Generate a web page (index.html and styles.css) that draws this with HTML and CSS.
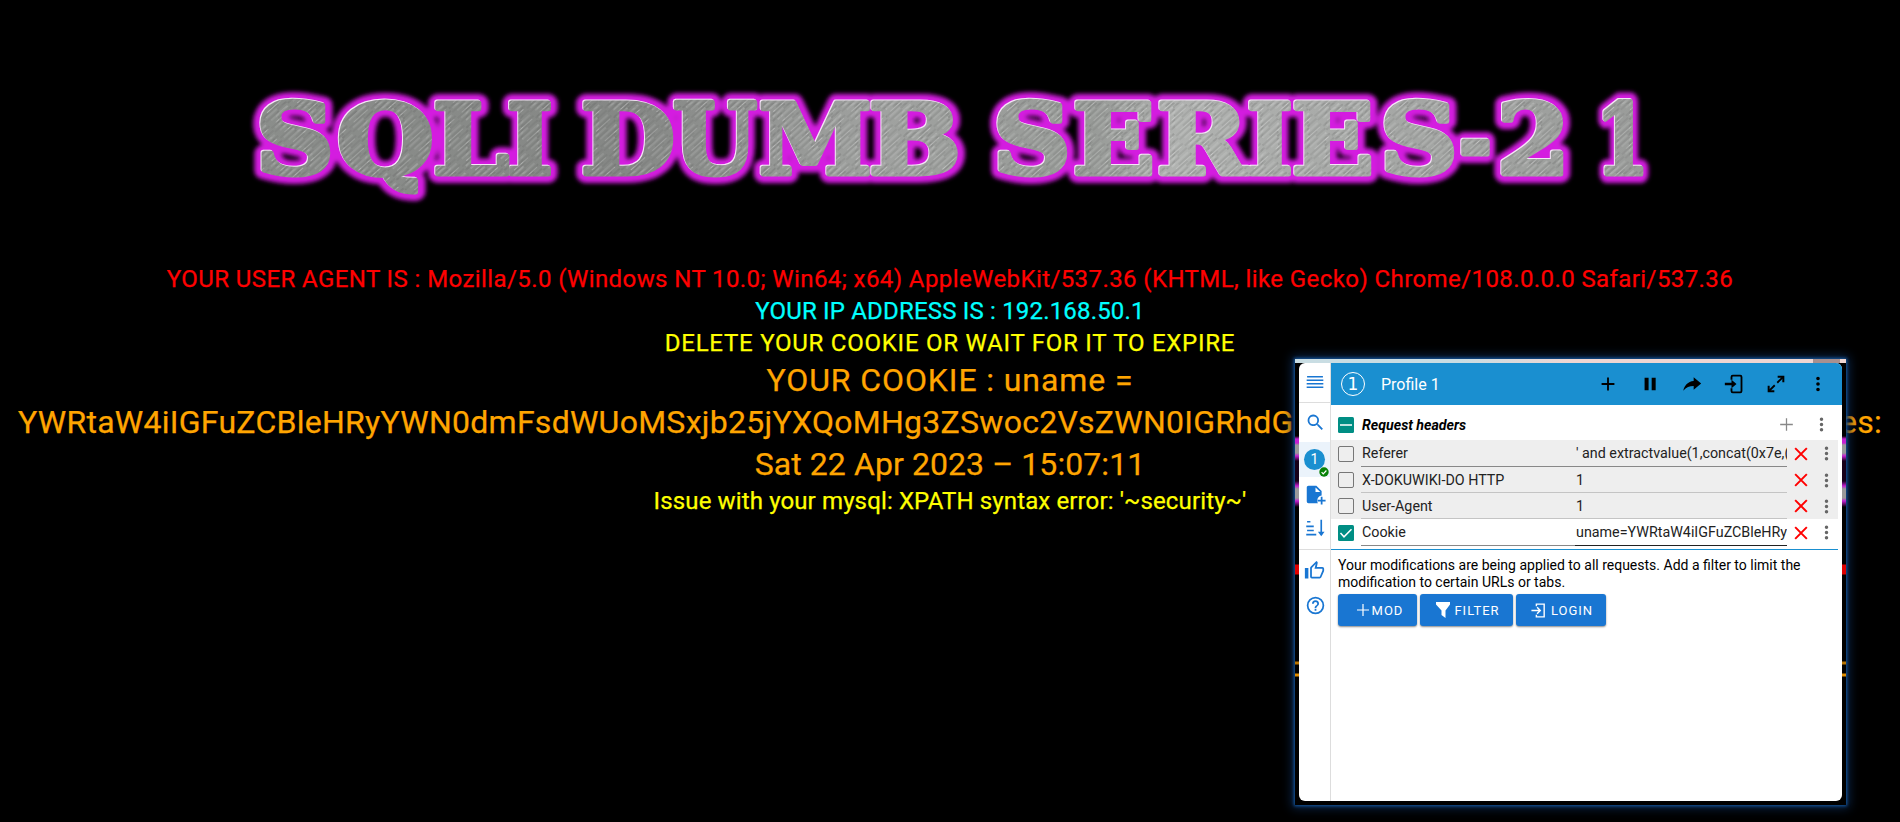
FILE: index.html
```html
<!DOCTYPE html>
<html lang="en">
<head>
<meta charset="utf-8">
<title>SQLI Dumb Series-21</title>
<link rel="stylesheet" href="styles.css">
</head>
<body>
<svg class="defs" width="0" height="0">
  <symbol id="plus" viewBox="0 0 24 24"><path d="M19 13h-6v6h-2v-6H5v-2h6V5h2v6h6z"/></symbol>
  <symbol id="thin-plus" viewBox="0 0 24 24"><path d="M20 12.800h-7.200V20h-1.600v-7.200H4v-1.600h7.200V4h1.600v7.200H20z"/></symbol>
  <symbol id="dots" viewBox="0 0 24 24"><path d="M12 8a2 2 0 1 0 0-4 2 2 0 0 0 0 4m0 2a2 2 0 1 0 0 4 2 2 0 0 0 0-4m0 6a2 2 0 1 0 0 4 2 2 0 0 0 0-4"/></symbol>
  <symbol id="login" viewBox="0 0 24 24"><path d="M9 6V3h11v18H9v-3M2 12h12M10 7.500l4.500 4.500-4.500 4.500" fill="none" stroke="currentColor" stroke-width="2"/></symbol>
  <symbol id="login-bold" viewBox="0 0 24 24"><path d="M9 7V3.500A1.500 1.500 0 0 1 10.500 2h9A1.500 1.500 0 0 1 21 3.500v17a1.500 1.500 0 0 1-1.500 1.500h-9A1.500 1.500 0 0 1 9 20.500V17" fill="none" stroke="currentColor" stroke-width="2.200"/><path d="M1 10.500h8V7l6 5-6 5v-3.500H1z"/></symbol>
  <symbol id="cross" viewBox="0 0 24 24"><path d="M5 5l14 14M19 5L5 19" stroke="#f00" stroke-width="2.400"/></symbol>
</svg>

<main class="page">
  <h1 class="banner">
    <svg width="1900" height="250" viewBox="0 0 1900 250" role="img">
      <defs>
        <linearGradient id="steel" x1="250" x2="1650" y1="100" y2="176" gradientUnits="userSpaceOnUse">
          <stop offset="0" stop-color="#8b8e8b"/><stop offset=".27" stop-color="#858785"/>
          <stop offset=".45" stop-color="#a0a2a0"/><stop offset=".6" stop-color="#979a97"/>
          <stop offset=".66" stop-color="#b0b2b0"/><stop offset="1" stop-color="#999b99"/>
        </linearGradient>
        <pattern id="brushed" width="13" height="29" patternUnits="userSpaceOnUse" patternTransform="rotate(48)">
          <path d="M1 0v17M4 8v21M7 0v12M9 12v17" stroke="#555" stroke-opacity=".25"/>
          <path d="M2.500 3v19M6 12v14M11 2v22" stroke="#fff" stroke-opacity=".18"/>
        </pattern>
        <filter id="soft" x="-5%" y="-40%" width="110%" height="180%"><feGaussianBlur stdDeviation="2.200"/></filter>
        <text id="wordmark" class="wordmark" y="174"><tspan x="256" textLength="78" lengthAdjust="spacingAndGlyphs">S</tspan><tspan x="337" textLength="97" lengthAdjust="spacingAndGlyphs">Q</tspan><tspan x="433" textLength="76" lengthAdjust="spacingAndGlyphs">L</tspan><tspan x="507" textLength="46" lengthAdjust="spacingAndGlyphs">I</tspan> <tspan x="581" textLength="94" lengthAdjust="spacingAndGlyphs">D</tspan><tspan x="673" textLength="84" lengthAdjust="spacingAndGlyphs">U</tspan><tspan x="759" textLength="113" lengthAdjust="spacingAndGlyphs">M</tspan><tspan x="869" textLength="92" lengthAdjust="spacingAndGlyphs">B</tspan> <tspan x="993" textLength="78" lengthAdjust="spacingAndGlyphs">S</tspan><tspan x="1073" textLength="82" lengthAdjust="spacingAndGlyphs">E</tspan><tspan x="1157" textLength="91" lengthAdjust="spacingAndGlyphs">R</tspan><tspan x="1247" textLength="46" lengthAdjust="spacingAndGlyphs">I</tspan><tspan x="1292" textLength="82" lengthAdjust="spacingAndGlyphs">E</tspan><tspan x="1380" textLength="78" lengthAdjust="spacingAndGlyphs">S</tspan><tspan x="1459" textLength="33" lengthAdjust="spacingAndGlyphs">-</tspan><tspan x="1497" textLength="73" lengthAdjust="spacingAndGlyphs">2</tspan> <tspan x="1596" textLength="53" lengthAdjust="spacingAndGlyphs">1</tspan></text>
      </defs>
      <use class="halo" href="#wordmark"/>
      <use class="edge" href="#wordmark" x="-1" y="-1"/>
      <use class="face" href="#wordmark"/>
      <use class="grain" href="#wordmark"/>
    </svg>
  </h1>
  <div class="report">
    <p class="agent">YOUR USER AGENT IS : Mozilla/5.0 (Windows NT 10.0; Win64; x64) AppleWebKit/537.36 (KHTML, like Gecko) Chrome/108.0.0.0 Safari/537.36</p>
    <p class="ip">YOUR IP ADDRESS IS : 192.168.50.1</p>
    <p class="notice">DELETE YOUR COOKIE OR WAIT FOR IT TO EXPIRE</p>
    <p class="cookie cookie-name">YOUR COOKIE : uname =</p>
    <p class="cookie cookie-value"><span>YWRtaW4iIGFuZCBleHRyYWN0dmFsdWUoMSxjb25jYXQoMHg3ZSwoc2VsZWN0IGRhdG</span><span>es:</span></p>
    <p class="cookie cookie-date">Sat 22 Apr 2023 – 15:07:11</p>
    <p class="issue">Issue with your mysql: XPATH syntax error: '~security~'</p>
  </div>
</main>

<aside class="popup">
  <div class="panel">
    <nav class="rail">
      <div class="rail-menu"><svg width="20" height="20" viewBox="0 0 24 24"><path d="M2.500 4.500h19M2 8.700h20M2 12.900h20M2 17.100h20" stroke="currentColor" stroke-width="1.900"/></svg></div>
      <div class="rail-search"><svg width="21" height="21" viewBox="0 0 24 24"><path d="M15.500 14h-.79l-.28-.27A6.500 6.500 0 1 0 13.730 14.430l.27.28v.79l5 4.990L20.490 19zm-6 0a4.500 4.500 0 1 1 0-9 4.500 4.500 0 0 1 0 9"/></svg></div>
      <div class="rail-profile"><span class="bubble">1</span><svg class="tick" width="10" height="10" viewBox="0 0 10 10"><circle cx="5" cy="5" r="4.700" fill="#078207"/><path d="M2.600 5.200l1.600 1.600 3.200-3.300" fill="none" stroke="#fff" stroke-width="1.200"/></svg></div>
      <div class="rail-file"><svg width="21" height="21" viewBox="0 0 24 24"><path d="M4 2h9l6 6v5c-3 .3-5 2.800-5 6 0 1 .2 2 .7 3H4a2 2 0 0 1-2-2V4c0-1.100.9-2 2-2m8 2v5h5.500zM18 14.500h2V18h3.500v2H20v3.500h-2V20h-3.500v-2H18z"/></svg></div>
      <div class="rail-sort"><svg width="20" height="20" viewBox="0 0 24 24"><path d="M2.500 4.500h4M1.500 10h9M2.500 15h8M1.500 20h12M19.500 2v18" fill="none" stroke="currentColor" stroke-width="2"/><path d="M15.500 16.500h8L19.500 22z"/></svg></div>
      <div class="rail-like"><svg width="21" height="21" viewBox="0 0 24 24"><path d="M9 21h9a2 2 0 0 0 1.840-1.220l3.020-7.050c.09-.23.14-.47.14-.73v-2a2 2 0 0 0-2-2h-6.310l.95-4.570.03-.32c0-.41-.17-.79-.44-1.060L14.170 1 7.580 7.590C7.220 7.950 7 8.450 7 9v10a2 2 0 0 0 2 2M9 9l4.340-4.340L12 10h9v2l-3 7H9zM1 9h4v12H1z"/></svg></div>
      <div class="rail-help"><svg width="21" height="21" viewBox="0 0 24 24"><path d="M11 18h2v-2h-2zm1-16a10 10 0 1 0 0 20 10 10 0 0 0 0-20m0 18a8 8 0 1 1 0-16 8 8 0 0 1 0 16m0-14a4 4 0 0 0-4 4h2a2 2 0 1 1 4 0c0 2-3 1.750-3 5h2c0-2.250 3-2.500 3-5a4 4 0 0 0-4-4"/></svg></div>
    </nav>
    <div class="content">
      <header class="toolbar">
        <span class="profile-no">1</span>
        <span class="profile-name">Profile 1</span>
        <div class="tools">
          <svg width="22" height="22"><use href="#plus"/></svg>
          <svg width="20" height="20" viewBox="0 0 24 24"><path d="M5.500 4.500h4.800v15H5.500zM14 4.500h4.800v15H14z"/></svg>
          <svg width="20" height="20" viewBox="0 0 24 24"><path d="M14 4l9 7.500-9 7.500v-4.500c-5 0-9 1.500-12.500 5.500C3 14 7 9 14 8.500z"/></svg>
          <svg width="20" height="20"><use href="#login-bold"/></svg>
          <svg width="20" height="20" viewBox="0 0 24 24"><path d="M13.500 10.500L20 4M10.500 13.500L4 20" stroke="currentColor" stroke-width="2.200"/><path d="M14 2h8v8h-2.400V4.400H14zM10 22H2v-8h2.400v5.600H10z"/></svg>
          <svg width="22" height="22"><use href="#dots"/></svg>
        </div>
      </header>
      <div class="section">
        <svg class="box" width="16" height="16" viewBox="0 0 16 16"><rect width="16" height="16" rx="1.500" fill="#008e84"/><path d="M2 8h12" stroke="#fff" stroke-width="1.300"/></svg>
        <b class="section-name">Request headers</b>
        <svg class="section-add" width="19" height="19"><use href="#thin-plus"/></svg>
        <svg class="more" width="21" height="21"><use href="#dots"/></svg>
      </div>
      <div class="row off first"><span class="check"></span><span class="key">Referer</span><span class="value">' and extractvalue(1,concat(0x7e,(</span><svg class="remove" width="20" height="20"><use href="#cross"/></svg><svg class="more" width="21" height="21"><use href="#dots"/></svg></div>
      <div class="row off light"><span class="check"></span><span class="key">X-DOKUWIKI-DO HTTP</span><span class="value">1</span><svg class="remove" width="20" height="20"><use href="#cross"/></svg><svg class="more" width="21" height="21"><use href="#dots"/></svg></div>
      <div class="row off light"><span class="check"></span><span class="key">User-Agent</span><span class="value">1</span><svg class="remove" width="20" height="20"><use href="#cross"/></svg><svg class="more" width="21" height="21"><use href="#dots"/></svg></div>
      <div class="row on"><svg class="box" width="16" height="16" viewBox="0 0 16 16"><rect width="16" height="16" rx="1.500" fill="#008e84"/><path d="M2.500 8l3.500 3.800 7.500-7.600" fill="none" stroke="#fff" stroke-width="1.500"/></svg><span class="key">Cookie</span><span class="value">uname=YWRtaW4iIGFuZCBleHRy</span><svg class="remove" width="20" height="20"><use href="#cross"/></svg><svg class="more" width="21" height="21"><use href="#dots"/></svg></div>
      <div class="rule"></div>
      <p class="hint">Your modifications are being applied to all requests. Add a filter to limit the<br>modification to certain URLs or tabs.</p>
      <div class="actions">
        <button class="mod"><svg width="18" height="18"><use href="#thin-plus"/></svg>MOD</button>
        <button class="filter"><svg width="16" height="16" viewBox="0 0 16 16"><path d="M1 0h14v2.500L10.500 8.500V16l-4-3V8.500L1 2.500z"/></svg>FILTER</button>
        <button class="login"><svg width="17" height="17"><use href="#login"/></svg>LOGIN</button>
      </div>
    </div>
  </div>
</aside>
</body>
</html>
```
FILE: styles.css
```css
* { box-sizing: border-box; }
body { margin: 0; width: 1900px; height: 822px; overflow: hidden; background: #000; font-family: Roboto, sans-serif; }
.defs { display: block; position: absolute; }
p { margin: 0; }

.banner { margin: 0; height: 250px; }
.banner svg { display: block; }
.wordmark { font: bold 98px "DejaVu Serif", serif; stroke-linejoin: round; }
.halo { fill: #d41fe0; stroke: #d41fe0; stroke-width: 18px; filter: url(#soft); }
.edge { fill: #f6e6f8; stroke: #f6e6f8; stroke-width: 5px; }
.face { fill: url(#steel); stroke: url(#steel); stroke-width: 5px; }
.grain { fill: url(#brushed); stroke: url(#brushed); stroke-width: 5px; }

.report { padding: 13px 18px 0; text-align: center; font-size: 24px; line-height: 32px; white-space: nowrap; -webkit-text-stroke: .25px currentColor; }
.agent { color: #f00; letter-spacing: .41px; }
.ip { color: #0ff; letter-spacing: .18px; }
.notice, .issue { color: #ff0; }
.notice { letter-spacing: .76px; }
.issue { letter-spacing: .13px; }
.cookie { color: #ffa500; font-size: 32px; line-height: 42px; }
.cookie-name { letter-spacing: .9px; }
.cookie-value { display: flex; justify-content: space-between; letter-spacing: .27px; }
.cookie-date { letter-spacing: .08px; }

.popup { position: absolute; left: 1295px; top: 359px; width: 551px; height: 446px; padding: 4px 4px 4px;
  background:
    linear-gradient(90deg, #c9dde3 0 30%, #efd6d2 50% 94%, #a8908f 94% 99%, #efd6d2 99%) 0 0 / 100% 4px no-repeat,
    linear-gradient(#000 77px, #c41fd2 80px 84px, #999 86px 94px, #c41fd2 97px, #170019 102px 122px, #c41fd2 127px, #999 130px 139px, #c41fd2 142px, #000 148px 205px, #e00000 206px 215px, #000 216px 302px, #b87400 303px 305px, #000 306px 314px, #e08d00 315px 317px, #000 318px);
  box-shadow: 0 0 3px 1px #1457a0, 0 0 10px 3px #0b2548; }
.panel { display: flex; width: 543px; height: 438px; overflow: hidden; border-radius: 6px; background: #fff; color: #222; }
.rail { display: flex; flex-direction: column; width: 32px; border-right: 1px solid #ddd; color: #1976d2; }
.rail > div { display: flex; align-items: center; justify-content: center; }
svg { fill: currentColor; flex: none; }
.rail .rail-menu { height: 40px; border-bottom: 1px solid #ddd; }
.rail .rail-search { height: 39px; padding-left: 1px; }
.rail .rail-profile { position: relative; height: 35px; background: #ebf3fb; }
.bubble { width: 21px; height: 21px; border-radius: 50%; background: #1a8fd0; color: #fff; font-size: 14px; line-height: 21px; text-align: center; }
.tick { position: absolute; right: 1px; bottom: 0; }
.rail .rail-file { height: 34px; padding-left: 2px; }
.rail .rail-sort { height: 39px; padding-bottom: 5px; border-bottom: 1px solid #ddd; }
.rail .rail-like { height: 41px; }
.rail .rail-help { height: 28px; padding-left: 1px; }

.content { width: 511px; }
.toolbar { display: flex; align-items: center; height: 42px; padding-left: 10px; background: #1a8fd0; color: #fff; }
.profile-no { width: 24px; height: 24px; border: 1px solid #fff; border-radius: 50%; font: 17px/22px "DejaVu Sans", sans-serif; text-align: center; }
.profile-name { width: 80px; margin-left: 16px; font-size: 16px; white-space: nowrap; }
.tools { display: grid; grid-template-columns: repeat(6, 42px); justify-items: center; align-items: center; margin-left: auto; margin-right: 3px; color: #000; }
.section { display: flex; align-items: center; height: 35px; padding: 4px 10px 0 7px; color: #000; }
.section-name { margin-left: 8px; font-size: 14.200px; font-style: italic; }
.section-add { margin-left: auto; margin-right: 15px; color: #888; }
.more { color: #666; }
.row { display: flex; align-items: center; width: 507px; height: 26px; padding-left: 7px; font-size: 14.300px; line-height: 26px; }
.row.first, .row.on { height: 27px; }
.row.off { background: #eee; }
.check { width: 16px; height: 16px; border: 1.500px solid #777; border-radius: 2px; }
.key { width: 214px; height: 100%; margin-left: 7px; padding-left: 1px; border-bottom: 1px solid #888; }
.value { width: 212px; height: 100%; padding-left: 1px; overflow: hidden; border-bottom: 1px solid #888; white-space: nowrap; }
.light .key, .light .value { border-color: #c4c4c4; }
.on .value { border-color: #222; }
.remove { margin: 0 5px 0 4px; }
.rule { width: 507px; height: 1px; margin-top: 3px; background: #1a8fd0; }
.hint { height: 41px; padding: 7px 7px 0; color: #000; font-size: 14px; line-height: 17px; white-space: nowrap; }
.actions { display: flex; gap: 3px; padding: 3px 7px; }
button { display: flex; align-items: center; justify-content: center; height: 32px; padding: 0; border: 0; border-radius: 3px; background: #1976d2; box-shadow: 0 1px 2px #0007; color: #fff; font: 13px Roboto, sans-serif; letter-spacing: 1px; }
.mod { width: 79px; padding-left: 2px; }
.filter { width: 93px; gap: 3px; padding-left: 2px; }
.login { width: 90px; gap: 4px; padding-left: 1px; }
```
